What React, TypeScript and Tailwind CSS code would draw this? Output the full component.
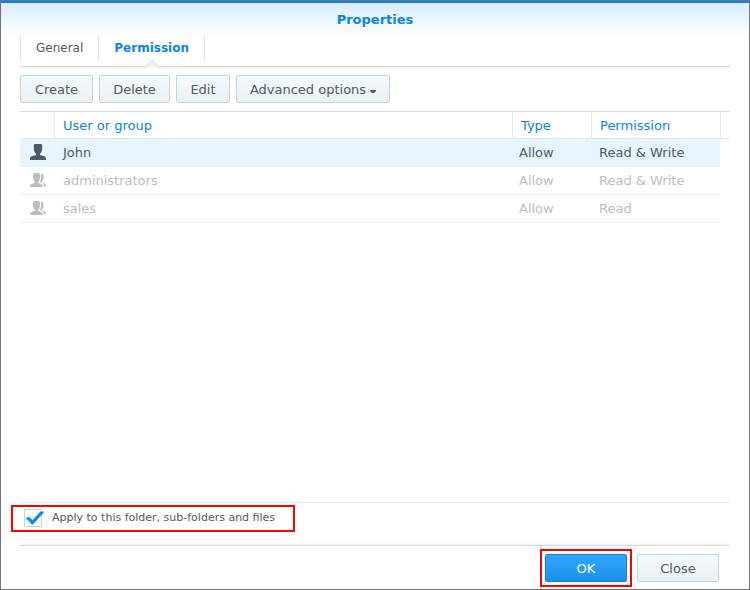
import { useState } from "react";
import type { ReactNode } from "react";
import clsx from "clsx";

type Entry = {
  name: string;
  kind: "user" | "group";
  type: string;
  permission: string;
  inherited: boolean;
};

const entries: Entry[] = [
  { name: "John", kind: "user", type: "Allow", permission: "Read & Write", inherited: false },
  { name: "administrators", kind: "group", type: "Allow", permission: "Read & Write", inherited: true },
  { name: "sales", kind: "group", type: "Allow", permission: "Read", inherited: true },
];

const tabs = ["General", "Permission"];

function UserIcon() {
  return (
    <svg width="16" height="16" viewBox="0 0 16 16" fill="#505a64" className="block" aria-hidden="true">
      <path d="M5 0h6c.8.3 1.200 1 1.200 2v2.500c0 1.500-.3 2.800-.9 3.800-.3.600-.7 1.100-1.300 1.500v1.200c.8.500 2.200.7 3.800 1C15.300 12.400 16 13.200 16 16H0c0-2.800.7-3.600 2.200-4 1.600-.3 3-.5 3.800-1V9.800c-.6-.4-1-.9-1.300-1.500-.6-1-.9-2.300-.9-3.800V2C3.800 1 4.200.3 5 0z" />
    </svg>
  );
}

function GroupIcon() {
  return (
    <svg width="16" height="14" viewBox="0 0 16 14" fill="#b9bec4" className="block" aria-hidden="true">
      <path d="M4.200 0h4.600c.8.300 1.200.9 1.200 1.800v2.400c0 1.200-.3 2.300-.8 3.200-.2.500-.6.900-1.100 1.200v1.200c.7.400 1.600.6 2.700.9 1.200.4 1.700 1.200 1.700 3.300H0c0-2.100.6-2.900 1.900-3.300 1.200-.3 2.300-.5 3-.9V8.600c-.5-.3-.9-.7-1.100-1.200C3.300 6.500 3 5.400 3 4.200V1.800C3 .9 3.400.3 4.200 0z" />
      <path d="M10.600 1h1.600c.9.300 1.300.9 1.300 1.800v1.700c0 1.100-.3 2-.7 2.700-.2.400-.5.700-.8.900v1.200c.6.500 1.300.7 2.200 1 1.300.4 1.800 1.200 1.800 2.900h-2.300c0-2-.6-3-1.800-3.400-.9-.300-1.500-.4-2-.7v-.4c.6-.8 1-1.900 1.100-3.200.2-1.700.1-3.200-.4-4.500z" />
    </svg>
  );
}

function Button({
  children,
  primary = false,
  className,
}: {
  children: ReactNode;
  primary?: boolean;
  className?: string;
}) {
  return (
    <button
      type="button"
      className={clsx(
        "flex h-7 items-center justify-center rounded-xs border pt-0.5 text-[13px]",
        primary
          ? "border-[#1482dc] bg-linear-to-b from-[#32a5ff] to-[#1991eb] text-white"
          : "border-[#c8d2dc] bg-linear-to-b from-[#f5faff] to-[#ebf0f5] text-[#505a64]",
        className
      )}
    >
      {children}
    </button>
  );
}

export default function App() {
  const [active, setActive] = useState("Permission");
  const [selected, setSelected] = useState("John");
  const [recursive, setRecursive] = useState(true);

  return (
    <main className="flex min-h-screen flex-col border border-[#737373] bg-white font-['DejaVu_Sans',Verdana,sans-serif] text-[#505a64]">
      <header className="border-t-2 border-[#0a84e0] bg-linear-to-b from-[#d7edff] to-white pt-1.5 pb-1.5">
        <h1 className="text-center text-[13px] leading-[21px] font-bold text-[#0a84e8]">Properties</h1>
      </header>

      <div className="flex flex-1 flex-col px-[19px]">
        <nav className="mb-2 flex border-b border-[#d7d7d7] pb-1.5 text-xs shadow-[0_2px_2px_-1px_#ececec]">
          {tabs.map((tab) => (
            <button
              key={tab}
              type="button"
              onClick={() => setActive(tab)}
              className={clsx(
                "relative h-6 border-l border-[#d7e1f0] px-[15px] last:border-r",
                active === tab && "font-bold text-[#0a84e8]"
              )}
            >
              {tab}
              {active === tab && (
                <svg
                  width="14"
                  height="8"
                  viewBox="0 0 14 8"
                  className="absolute top-full left-1/2 -translate-x-1/2"
                  aria-hidden="true"
                >
                  <path d="M.5 8V6.500L7 .5L13.500 6.500V8z" fill="#f5f5f5" />
                  <path d="M0 6.500H1L7 .5L13 6.500H14" fill="none" stroke="#cdcdcd" />
                </svg>
              )}
            </button>
          ))}
        </nav>

        <div className="mb-2 flex gap-1.5">
          <Button className="w-[73px]">Create</Button>
          <Button className="w-[71px]">Delete</Button>
          <Button className="w-[54px]">Edit</Button>
          <Button className="w-[154px]">
            Advanced options
            <svg width="6" height="3" viewBox="0 0 6 3" fill="#505a64" className="mt-0.5 ml-1" aria-hidden="true">
              <path d="M0 0h6v1L4 3H2L0 1z" />
            </svg>
          </Button>
        </div>

        <div className="flex-1 border-y border-t-[#d2dfea] border-b-[#e6eef5]">
          <table className="w-full table-fixed border-separate border-spacing-0 text-left text-[13px]">
            <colgroup>
              <col className="w-[35px]" />
              <col />
              <col className="w-[79px]" />
              <col className="w-[128px]" />
              <col className="w-2.5" />
            </colgroup>
            <thead>
              <tr className="h-[27px] text-[#0a84e8] *:border-b *:border-[#e1ebf5] *:p-0 *:pt-0.5 *:font-normal">
                <th className="border-r" aria-label="Kind" />
                <th className="border-r">
                  <span className="pl-2">User or group</span>
                </th>
                <th className="border-r">
                  <span className="pl-2">Type</span>
                </th>
                <th>
                  <span className="pl-2">Permission</span>
                </th>
                <td className="border-l" />
              </tr>
            </thead>
            <tbody>
              {entries.map((e) => (
                <tr
                  key={e.name}
                  onClick={() => setSelected(e.name)}
                  className={clsx(
                    "h-7 *:border-b *:border-[#ebf0f5] *:py-0 *:last:border-0",
                    e.inherited && "text-[#b9bec4]",
                    selected === e.name && "*:not-last:bg-[#e6f5ff]"
                  )}
                >
                  <td className="pr-0 pl-2.5">
                    <div className="pb-0.5">{e.kind === "user" ? <UserIcon /> : <GroupIcon />}</div>
                  </td>
                  <td className="pr-0 pl-2">{e.name}</td>
                  <td className="pr-0 pl-1.5">{e.type}</td>
                  <td className="pr-0 pl-[7px]">{e.permission}</td>
                  <td className="p-0" />
                </tr>
              ))}
            </tbody>
          </table>
        </div>

        <div className="mb-[13px] flex">
          <label className="mt-0.5 -ml-[9px] flex h-[27px] items-start gap-2.5 border-2 border-[#ff0000] pt-0.5 pr-[18px] pl-[11px] text-[11px] leading-[18px]">
            <span className="relative flex">
              <input
                type="checkbox"
                checked={recursive}
                onChange={(e) => setRecursive(e.target.checked)}
                className="size-[18px] appearance-none border border-[#c8d2dc] bg-white"
              />
              {recursive && (
                <svg
                  width="18"
                  height="14"
                  viewBox="0 0 18 14"
                  className="pointer-events-none absolute top-0.5 left-0.5"
                  aria-hidden="true"
                >
                  <path d="M0 7.500L2.500 5.500L6.500 9L14.500 .5H17.800V1.500L7 13.500H6z" fill="#0a8cf0" />
                </svg>
              )}
            </span>
            Apply to this folder, sub-folders and files
          </label>
        </div>
      </div>

      <footer className="mx-[19px] flex items-center justify-end gap-[5px] border-t border-[#d7d7d7] pt-[3px] pr-[11px] pb-0.5 shadow-[0_-2px_2px_-1px_#ececec]">
        <div className="border-2 border-[#ff0000] p-[3px]">
          <Button primary className="w-[82px]">
            OK
          </Button>
        </div>
        <Button className="w-[82px]">Close</Button>
      </footer>
    </main>
  );
}
